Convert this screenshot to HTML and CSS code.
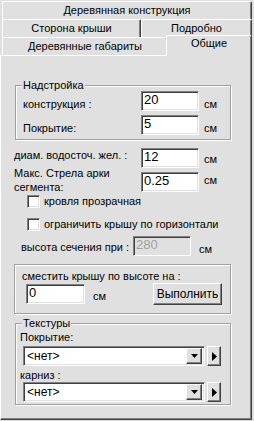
FILE: index.html
```html
<!DOCTYPE html>
<html lang="ru">
<head>
    <meta charset="UTF-8">
    <title>Общие</title>
    <link rel="stylesheet" href="styles.css">
</head>
<body>
    <div class="tabs">
        <div class="tab-row">
            <div class="tab grow">Деревянная конструкция</div>
        </div>
        <div class="tab-row">
            <div class="tab tab-side">Сторона крыши</div>
            <div class="tab grow">Подробно</div>
        </div>
        <div class="tab-row">
            <div class="tab tab-sizes">Деревянные габариты</div>
            <div class="tab grow active">Общие</div>
        </div>
    </div>

    <div class="panel">
        <!-- Надстройка -->
        <fieldset class="group group-top">
            <legend>Надстройка</legend>
            <div class="row row-first">
                <label class="lbl lbl-in">конструкция :</label>
                <input type="text" class="edit" value="20">
                <span class="unit unit-in">см</span>
            </div>
            <div class="row row-second">
                <label class="lbl lbl-in">Покрытие:</label>
                <input type="text" class="edit" value="5">
                <span class="unit unit-in">см</span>
            </div>
        </fieldset>

        <div class="row row-pipe">
            <label class="lbl lbl-out">диам. водосточ. жел. :</label>
            <input type="text" class="edit" value="12">
            <span class="unit unit-pipe">см</span>
        </div>

        <div class="row row-arc">
            <label class="lbl lbl-out lbl-two">Макс. Стрела арки<br>сегмента:</label>
            <input type="text" class="edit" value="0.25">
            <span class="unit unit-arc">см</span>
        </div>

        <label class="check-row check-first">
            <input type="checkbox" class="check">
            <span>кровля прозрачная</span>
        </label>
        <label class="check-row check-second">
            <input type="checkbox" class="check">
            <span>ограничить крышу по горизонтали</span>
        </label>

        <div class="row row-cut">
            <label class="lbl lbl-cut">высота сечения при :</label>
            <input type="text" class="edit edit-off" value="280" disabled>
            <span class="unit unit-cut">см</span>
        </div>

        <!-- сдвиг крыши -->
        <div class="box">
            <div class="box-title">сместить крышу по высоте на :</div>
            <div class="row row-shift">
                <input type="text" class="edit edit-shift" value="0">
                <span class="unit unit-shift">см</span>
                <button class="btn">Выполнить</button>
            </div>
        </div>

        <!-- Текстуры -->
        <fieldset class="group group-tex">
            <legend>Текстуры</legend>
            <div class="tex-label tex-first">Покрытие:</div>
            <div class="tex-row">
                <div class="combo">
                    <span class="combo-text">&lt;нет&gt;</span>
                    <span class="combo-btn">
                        <svg width="7" height="4" viewBox="0 0 7 4"><path d="M0 0h7L3.5 4z" fill="#000"/></svg>
                    </span>
                </div>
                <span class="more-btn">
                    <svg width="5" height="9" viewBox="0 0 5 9"><path d="M0 0l5 4.5L0 9z" fill="#000"/></svg>
                </span>
            </div>
            <div class="tex-label tex-second">карниз :</div>
            <div class="tex-row">
                <div class="combo">
                    <span class="combo-text">&lt;нет&gt;</span>
                    <span class="combo-btn">
                        <svg width="7" height="4" viewBox="0 0 7 4"><path d="M0 0h7L3.5 4z" fill="#000"/></svg>
                    </span>
                </div>
                <span class="more-btn">
                    <svg width="5" height="9" viewBox="0 0 5 9"><path d="M0 0l5 4.5L0 9z" fill="#000"/></svg>
                </span>
            </div>
        </fieldset>
    </div>
</body>
</html>
```

FILE: styles.css
```css
/* Base */
body {
    margin: 0;
    width: 254px;
    height: 421px;
    overflow: hidden;
    background: #e0e0e0;
    font-family: "Liberation Sans", Arial, sans-serif;
    font-size: 11px;
    line-height: 13px;
    color: #000;
}

/* Tabs */
.tabs {
    width: 252px;
    padding: 1px 0 0 2px;
    box-sizing: border-box;
}

.tab-row {
    display: flex;
    height: 18px;
}

.tab {
    box-sizing: border-box;
    height: 18px;
    border-top: 1px solid #fff;
    border-left: 1px solid #fff;
    border-right: 1px solid #404040;
    box-shadow: inset -1px 0 0 #808080;
    border-radius: 2px 2px 0 0;
    text-align: center;
    font-size: 11px;
    line-height: 16px;
    white-space: nowrap;
}

.grow {
    flex: 1;
}

.tab-side {
    width: 139px;
}

.tab-sizes {
    width: 166px;
}

.tab.active {
    position: relative;
    z-index: 1;
    height: 21px;
    margin-top: -2px;
    margin-left: -2px;
    line-height: 15px;
    background: #e0e0e0;
}

/* Panel */
.panel {
    width: 252px;
    height: 365px;
    box-sizing: border-box;
    border-top: 1px solid #fff;
    border-left: 1px solid #fff;
    border-right: 1px solid #404040;
    border-bottom: 1px solid #404040;
    box-shadow: inset -1px -1px 0 #808080;
}

/* Group boxes */
.group {
    width: 216px;
    box-sizing: border-box;
    margin: 0 0 0 14px;
    padding: 0 0 4px 7px;
    border: 1px solid #a0a0a0;
    box-shadow: inset 1px 1px 0 #fff, 1px 1px 0 #fff;
    min-width: 0;
}

.group legend {
    padding: 0 1px;
    margin-left: -1px;
    background: #e0e0e0;
    font-size: 11px;
    line-height: 13px;
}

.group-top {
    margin-top: 23px;
}

.group-tex {
    margin-top: 3px;
    padding-bottom: 2px;
}

.box {
    width: 217px;
    box-sizing: border-box;
    margin: 8px 0 0 13px;
    padding: 5px 8px 8px 7px;
    border: 1px solid #a0a0a0;
    box-shadow: inset 1px 1px 0 #fff, 1px 1px 0 #fff;
}

/* Rows */
.row {
    display: flex;
    align-items: flex-start;
}

.lbl-in {
    width: 118px;
    padding-top: 7px;
}

.lbl-out {
    width: 127px;
    margin-left: 13px;
}

.row-first {
    margin-top: -1px;
}

.row-second {
    margin-top: 4px;
}

.row-pipe {
    margin-top: 8px;
}

.row-pipe .lbl {
    padding-top: 1px;
}

.row-arc {
    height: 28px;
    align-items: center;
}

.lbl-two {
    align-self: flex-start;
    margin-top: -2px;
    line-height: 14px;
}

.lbl-cut {
    width: 112px;
    margin-left: 20px;
    padding-top: 5px;
    color: #000;
}

.row-cut {
    margin-top: 5px;
}

.unit {
    margin-left: 5px;
}

.unit-in {
    padding-top: 7px;
}

.unit-pipe {
    padding-top: 5px;
}

.unit-arc {
    margin-top: -3px;
}

.unit-cut {
    margin-left: 8px;
    padding-top: 7px;
}

/* Edit fields */
.edit {
    width: 58px;
    height: 20px;
    box-sizing: border-box;
    margin: 0;
    padding: 0 2px 4px 2px;
    border: 1px solid;
    border-color: #808080 #fff #fff #808080;
    box-shadow: inset 1px 1px 0 #404040, inset -1px -1px 0 #e0e0e0;
    background: #fff;
    font-family: "Liberation Sans", Arial, sans-serif;
    font-size: 13px;
    color: #000;
    outline: none;
}

.edit-off {
    background: #e0e0e0;
    color: #a0a0a0;
    -webkit-text-fill-color: #a0a0a0;
}

.edit-shift {
    width: 59px;
    margin-left: 4px;
}

.row-shift {
    align-items: center;
    height: 22px;
}

.unit-shift {
    margin-left: 8px;
    padding-top: 4px;
}

/* Buttons */
.btn {
    margin-left: auto;
    width: 69px;
    height: 22px;
    padding: 0;
    border: 1px solid;
    border-color: #fff #404040 #404040 #fff;
    box-shadow: inset -1px -1px 0 #808080;
    background: #e0e0e0;
    font-family: "Liberation Sans", Arial, sans-serif;
    font-size: 12px;
    color: #000;
}

/* Checkboxes */
.check-row {
    display: flex;
    align-items: center;
    height: 13px;
    margin-left: 26px;
}

.check-first {
    margin-top: -1px;
}

.check-second {
    margin-top: 10px;
}

.check {
    appearance: none;
    width: 13px;
    height: 13px;
    margin: 0 4px 0 0;
    box-sizing: border-box;
    border: 1px solid;
    border-color: #808080 #fff #fff #808080;
    box-shadow: inset 1px 1px 0 #404040, inset -1px -1px 0 #e0e0e0;
    background: #fff;
}

/* Textures */
.tex-label {
    margin-left: -3px;
}

.tex-first {
    margin-top: 1px;
}

.tex-second {
    margin-top: 3px;
}

.tex-row {
    display: flex;
    margin-top: 2px;
}

.tex-second + .tex-row {
    margin-top: 0;
}

.combo {
    display: flex;
    align-items: center;
    width: 182px;
    height: 20px;
    box-sizing: border-box;
    padding: 2px;
    border: 1px solid;
    border-color: #808080 #fff #fff #808080;
    box-shadow: inset 1px 1px 0 #404040, inset -1px -1px 0 #e0e0e0;
    background: #fff;
}

.combo-text {
    flex: 1;
    padding-left: 1px;
    font-size: 12px;
}

.combo-btn,
.more-btn {
    display: flex;
    align-items: center;
    justify-content: center;
    box-sizing: border-box;
    border: 1px solid;
    border-color: #fff #404040 #404040 #fff;
    box-shadow: inset -1px -1px 0 #808080;
    background: #e0e0e0;
}

.combo-btn {
    width: 16px;
    height: 16px;
}

.more-btn {
    width: 14px;
    height: 20px;
    margin-left: 2px;
}
```
